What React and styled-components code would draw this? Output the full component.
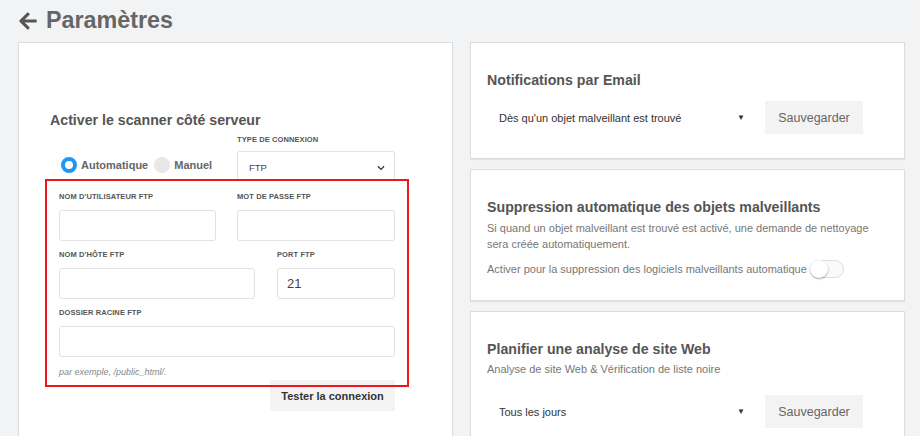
import React from "react";
import styled, { createGlobalStyle } from "styled-components";
import { FaArrowLeft, FaChevronDown } from "react-icons/fa";

const GlobalStyle = createGlobalStyle`
  html, body {
    margin: 0;
    padding: 0;
    background: #f2f3f5;
    font-family: "Liberation Sans", Arial, sans-serif;
    overflow: hidden;
  }
`;

const Page = styled.div`
  padding: 0 15px 0 18px;
  height: 436px;
  box-sizing: border-box;
  overflow: hidden;
`;

const TitleBar = styled.div`
  display: flex;
  align-items: center;
  gap: 8px;
  height: 42px;
  color: #666;

  svg {
    color: #555;
    font-size: 20px;
    margin-top: -1px;
  }
`;

const Title = styled.h1`
  margin: 0;
  font-size: 23.3px;
  font-weight: bold;
  color: #666;
  line-height: 1;
  margin-top: -1px;
`;

const Columns = styled.div`
  display: grid;
  grid-template-columns: 435px 435px;
  gap: 17px;
  align-items: start;
`;

const Card = styled.section`
  background: #fff;
  border: 1px solid #dcdcdc;
  box-shadow: 0 1px 1px rgba(0, 0, 0, 0.06);
  box-sizing: border-box;
  padding: ${({ $pad }) => $pad || "27px 16px 24px"};
  height: ${({ $height }) => ($height ? `${$height}px` : "auto")};
`;

const RightColumn = styled.div`
  display: flex;
  flex-direction: column;
  gap: 10px;
`;

const Heading = styled.h2`
  margin: 0;
  font-size: 14.2px;
  line-height: 20px;
  font-weight: bold;
  color: #555;
`;

const Form = styled.div`
  margin: 5px 0 0 9px;
  width: 336px;
  display: flex;
  flex-direction: column;
`;

const Row = styled.div`
  display: grid;
  grid-template-columns: ${({ $cols }) => $cols};
  column-gap: ${({ $gap }) => $gap || 21}px;
  margin-top: ${({ $top }) => $top || 0}px;
`;

const Field = styled.div`
  display: flex;
  flex-direction: column;
`;

const Label = styled.label`
  font-size: 7.5px;
  line-height: 10px;
  font-weight: bold;
  color: #555;
  text-transform: uppercase;
  letter-spacing: 0.1px;
  margin-bottom: ${({ $mb }) => $mb || 8}px;
`;

const Input = styled.div`
  height: 31px;
  box-sizing: border-box;
  border: 1px solid #e2e2e2;
  border-radius: 3px;
  background: #fff;
  font-size: 13px;
  color: #444;
  display: flex;
  align-items: center;
  padding-left: 9px;
`;

const SelectBox = styled.div`
  height: 28px;
  box-sizing: border-box;
  border: 1px solid #e2e2e2;
  border-bottom: none;
  border-radius: 3px 3px 0 0;
  display: flex;
  align-items: center;
  justify-content: space-between;
  padding: 4px 9px 0 11px;
  font-size: 9.5px;
  color: #444;

  svg {
    font-size: 8px;
    color: #333;
  }
`;

const RadioGroup = styled.div`
  align-self: end;
  height: 28px;
  display: flex;
  align-items: center;
  padding-left: 2px;
  gap: 4px;
`;

const Radio = styled.span`
  width: 16px;
  height: 16px;
  border-radius: 50%;
  box-sizing: border-box;
  background: ${({ $checked }) => ($checked ? "#fff" : "#e8e8e8")};
  border: ${({ $checked }) => ($checked ? "4.5px solid #2196f3" : "none")};
  flex: none;
`;

const RadioText = styled.span`
  font-size: 11px;
  font-weight: bold;
  color: #666;
  margin-right: ${({ $mr }) => $mr || 0}px;
`;

const Highlight = styled.div`
  position: relative;
  z-index: 1;
  margin: 0 -14px;
  border: 2px solid #f0141c;
  padding: 11px 12px 7px;
`;

const Hint = styled.div`
  margin-top: 9px;
  font-size: 9px;
  line-height: 12px;
  font-style: italic;
  color: #888;
`;

const Button = styled.button`
  border: none;
  background: #f3f3f3;
  font-family: inherit;
  box-sizing: border-box;
  height: ${({ $h }) => $h}px;
  width: ${({ $w }) => $w}px;
  font-size: ${({ $bold }) => ($bold ? "11px" : "12.5px")};
  font-weight: ${({ $bold }) => ($bold ? "bold" : "normal")};
  color: ${({ $bold }) => ($bold ? "#333" : "#666")};
  padding: 0;
  flex: none;
`;

const TestButton = styled(Button)`
  align-self: flex-end;
  margin-top: -7px;
`;

const SelectRow = styled.div`
  display: flex;
  align-items: center;
  margin-top: ${({ $top }) => $top}px;
`;

const PlainSelect = styled.div`
  width: 268px;
  box-sizing: border-box;
  display: flex;
  align-items: center;
  justify-content: space-between;
  padding: 0 10px 0 12px;
  font-size: 11px;
  color: #333;
  margin-right: 10px;

  span:last-child {
    font-size: 8px;
  }
`;

const Text = styled.p`
  margin: ${({ $m }) => $m || 0};
  font-size: 11px;
  line-height: 16px;
  color: #777;
`;

const ToggleLine = styled.div`
  display: flex;
  align-items: center;
  gap: 3px;
  margin-top: 8px;
  font-size: 11px;
  color: #777;
`;

const Toggle = styled.span`
  width: 34px;
  height: 18px;
  box-sizing: border-box;
  border-radius: 9px;
  border: 1px solid #ddd;
  background: #fafafa;
  position: relative;

  &::after {
    content: "";
    position: absolute;
    left: -1px;
    top: -1px;
    width: 18px;
    height: 18px;
    border-radius: 50%;
    background: #fff;
    box-shadow: 0 1px 2px rgba(0, 0, 0, 0.35);
  }
`;

export default function App() {
  return (
    <Page>
      <GlobalStyle />
      <TitleBar>
        <FaArrowLeft />
        <Title>Paramètres</Title>
      </TitleBar>
      <Columns>
        <Card $pad="67px 0 0 31px" $height={420}>
          <Heading>Activer le scanner côté serveur</Heading>
          <Form>
            <Row $cols="157px 158px">
              <RadioGroup>
                <Radio $checked />
                <RadioText $mr={2}>Automatique</RadioText>
                <Radio />
                <RadioText>Manuel</RadioText>
              </RadioGroup>
              <Field>
                <Label $mb={6}>Type de connexion</Label>
                <SelectBox>
                  <span>FTP</span>
                  <FaChevronDown />
                </SelectBox>
              </Field>
            </Row>
            <Highlight>
              <Row $cols="157px 158px">
                <Field>
                  <Label>Nom d'utilisateur FTP</Label>
                  <Input />
                </Field>
                <Field>
                  <Label>Mot de passe FTP</Label>
                  <Input />
                </Field>
              </Row>
              <Row $cols="196px 118px" $gap={22} $top={9}>
                <Field>
                  <Label>Nom d'hôte FTP</Label>
                  <Input />
                </Field>
                <Field>
                  <Label>Port FTP</Label>
                  <Input>21</Input>
                </Field>
              </Row>
              <Row $cols="336px" $top={9}>
                <Field>
                  <Label>Dossier racine FTP</Label>
                  <Input />
                </Field>
              </Row>
              <Hint>par exemple, /public_html/.</Hint>
            </Highlight>
            <TestButton $bold $w={125} $h={31}>
              Tester la connexion
            </TestButton>
          </Form>
        </Card>
        <RightColumn>
          <Card $height={117}>
            <Heading>Notifications par Email</Heading>
            <SelectRow $top={11}>
              <PlainSelect>
                <span>Dès qu'un objet malveillant est trouvé</span>
                <span>▼</span>
              </PlainSelect>
              <Button $w={98} $h={33}>Sauvegarder</Button>
            </SelectRow>
          </Card>
          <Card $height={132}>
            <Heading>Suppression automatique des objets malveillants</Heading>
            <Text $m="3px 0 0">
              Si quand un objet malveillant est trouvé est activé, une demande de
              nettoyage sera créée automatiquement.
            </Text>
            <ToggleLine>
              <span>Activer pour la suppression des logiciels malveillants automatique</span>
              <Toggle />
            </ToggleLine>
          </Card>
          <Card $height={140}>
            <Heading>Planifier une analyse de site Web</Heading>
            <Text $m="2px 0 0">Analyse de site Web &amp; Vérification de liste noire</Text>
            <SelectRow $top={18}>
              <PlainSelect>
                <span>Tous les jours</span>
                <span>▼</span>
              </PlainSelect>
              <Button $w={98} $h={33}>Sauvegarder</Button>
            </SelectRow>
          </Card>
        </RightColumn>
      </Columns>
    </Page>
  );
}
